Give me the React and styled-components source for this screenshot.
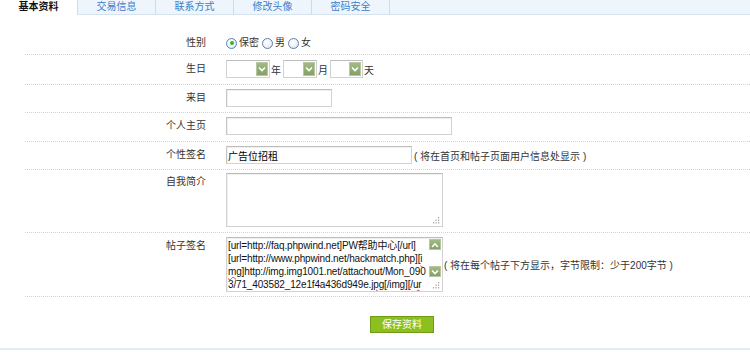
import React from 'react';
import styled, { createGlobalStyle } from 'styled-components';

const Global = createGlobalStyle`
  html, body { margin: 0; padding: 0; background: #fff; }
  body {
    font-family: "Liberation Sans", "Noto Sans CJK SC", sans-serif;
    font-size: 10px;
    color: #333;
  }
  * { box-sizing: border-box; }
`;

const Page = styled.div`
  width: 750px;
  height: 352px;
  overflow: hidden;
  display: flex;
  flex-direction: column;
`;

const TabBar = styled.div`
  display: flex;
  height: 15px;
  background: #eef5fd;
  border-bottom: 1px solid #d5e3ef;
`;

const Tab = styled.div`
  width: ${p => (p.$active ? 77 : 78)}px;
  height: ${p => (p.$active ? 15 : 14)}px;
  line-height: 14px;
  text-align: center;
  background: ${p => (p.$active ? '#fff' : 'transparent')};
  border-left: ${p => (p.$active ? 'none' : '1px solid #cadcee')};
  color: ${p => (p.$active ? '#111' : '#3d80c8')};
  font-weight: ${p => (p.$active ? 'bold' : 'normal')};
  flex-shrink: 0;
  cursor: pointer;
`;

const TabFill = styled.div`
  flex: 1;
  border-left: 1px solid #cadcee;
`;

const Form = styled.div`
  flex: 1;
  padding-top: 17px;
  display: flex;
  flex-direction: column;
`;

const Row = styled.div`
  display: flex;
  align-items: flex-start;
  margin-left: 25px;
  padding: ${p => p.$pt}px 0 ${p => p.$pb}px;
  border-bottom: 1px dotted #c3d8ea;
`;

const Label = styled.div`
  width: 201px;
  flex-shrink: 0;
  padding-right: 20px;
  text-align: right;
  line-height: ${p => p.$lh || 18}px;
  color: #333;
`;

const Field = styled.div`
  display: flex;
  align-items: center;
  gap: ${p => p.$gap || 0}px;
`;

const TextInput = styled.input`
  width: ${p => p.$w}px;
  height: 18px;
  border: 1px solid #d2d2d2;
  border-top-color: #bdbdbd;
  border-left-color: #c6c6c6;
  box-shadow: inset 1px 1px 0 #f0f0f0;
  padding: 0 1px;
  margin: 0;
  font-family: "Liberation Sans", "Noto Sans CJK SC", sans-serif;
  font-size: 10px;
  color: #000;
  outline: none;
`;

const Hint = styled.span`
  color: #333;
  white-space: nowrap;
  margin-left: ${p => p.$ml || 2}px;
`;

const RadioGroup = styled.div`
  display: flex;
  align-items: center;
  gap: 3px;
  height: 14px;
`;

const RadioOption = styled.label`
  display: inline-flex;
  align-items: center;
  gap: 2px;
  line-height: 14px;
  color: #333;
`;

const RadioCircle = styled.span`
  width: 11px;
  height: 11px;
  border-radius: 50%;
  border: 1px solid #5f82a9;
  background: radial-gradient(circle at 40% 35%, #ffffff 0%, #eef2f6 55%, #cfd9e4 100%);
  display: inline-flex;
  align-items: center;
  justify-content: center;
  &::after {
    content: '';
    width: 4px;
    height: 4px;
    border-radius: 50%;
    background: ${p => (p.$checked ? '#2fb72f' : 'transparent')};
  }
`;

const SelectWrap = styled.div`
  display: inline-flex;
  align-items: center;
  gap: 1px;
`;

const SelectBox = styled.div`
  width: ${p => p.$w}px;
  height: 18px;
  border: 1px solid #d2d2d2;
  border-top-color: #bdbdbd;
  background: #fff;
  display: flex;
  justify-content: flex-end;
  align-items: center;
  padding: 1px;
`;

const GreenBtn = styled.span`
  width: 12px;
  height: ${p => p.$h || 14}px;
  background: linear-gradient(#a2ba86, #85a064);
  border: 1px solid #b5c8a0;
  display: inline-flex;
  align-items: center;
  justify-content: center;
  flex-shrink: 0;
`;

const Chevron = ({ up }) => (
  <svg width="8" height="6" viewBox="0 0 8 6">
    <polyline
      points={up ? '1,5 4,2 7,5' : '1,1.5 4,4.5 7,1.5'}
      fill="none"
      stroke="#fff"
      strokeWidth="1.6"
    />
  </svg>
);

const Unit = styled.span`
  color: #333;
  margin-right: 2px;
`;

const AreaWrap = styled.div`
  position: relative;
  width: ${p => p.$w}px;
  height: ${p => p.$h}px;
`;

const TextArea = styled.textarea`
  width: 100%;
  height: 100%;
  display: block;
  margin: 0;
  border: 1px solid #d2d2d2;
  border-top-color: #bdbdbd;
  box-shadow: inset 1px 1px 0 #f0f0f0;
  resize: none;
  outline: none;
  font-family: "Liberation Sans", "Noto Sans CJK SC", sans-serif;
  font-size: 10px;
`;

const FakeArea = styled.div`
  width: 100%;
  height: 100%;
  display: flex;
  border: 1px solid #d2d2d2;
  border-top-color: #bdbdbd;
  box-shadow: inset 1px 1px 0 #f0f0f0;
  background: #fff;
`;

const AreaText = styled.div`
  flex: 1;
  min-width: 0;
  overflow: hidden;
  padding: 1px 0 0 1px;
  font-family: "Liberation Sans", "Noto Sans CJK SC", sans-serif;
  font-size: 10px;
  letter-spacing: -0.15px;
  line-height: 13px;
  color: #111;
`;

const Line = styled.div`
  white-space: nowrap;
`;

const Typo = styled.span`
  text-decoration: underline wavy #e23b3b;
  text-decoration-thickness: 1px;
  text-underline-offset: 1px;
`;

const ScrollCol = styled.div`
  width: 13px;
  flex-shrink: 0;
  display: flex;
  flex-direction: column;
  align-items: center;
  padding-top: 1px;
  margin-right: 1px;
`;

const Track = styled.div`
  height: 16px;
`;

const Grip = styled.svg`
  position: absolute;
  right: 3px;
  bottom: 3px;
`;

const GripIcon = () => (
  <Grip width="7" height="7" viewBox="0 0 7 7">
    <rect x="5" y="0" width="1.2" height="1.2" fill="#9a9a9a" />
    <rect x="2.5" y="2.6" width="1.2" height="1.2" fill="#9a9a9a" />
    <rect x="5" y="2.6" width="1.2" height="1.2" fill="#9a9a9a" />
    <rect x="0" y="5.2" width="1.2" height="1.2" fill="#9a9a9a" />
    <rect x="2.5" y="5.2" width="1.2" height="1.2" fill="#9a9a9a" />
    <rect x="5" y="5.2" width="1.2" height="1.2" fill="#9a9a9a" />
  </Grip>
);

const ButtonBar = styled.div`
  padding: 19px 0 0 370px;
  flex: 1;
`;

const SaveButton = styled.button`
  width: 64px;
  height: 17px;
  padding: 0;
  margin: 0;
  background: #8cc01f;
  border: 1px solid #6f9b16;
  color: #fff;
  font-family: "Liberation Sans", "Noto Sans CJK SC", sans-serif;
  font-size: 10px;
  line-height: 15px;
  cursor: pointer;
`;

const BottomLine = styled.div`
  height: 2px;
  background: #e1ecf5;
  margin-bottom: 2px;
`;

const tabs = ['基本资料', '交易信息', '联系方式', '修改头像', '密码安全'];

const Select = ({ w, unit }) => (
  <SelectWrap>
    <SelectBox $w={w}>
      <GreenBtn>
        <Chevron />
      </GreenBtn>
    </SelectBox>
    <Unit>{unit}</Unit>
  </SelectWrap>
);

export default function App() {
  return (
    <>
      <Global />
      <Page>
        <TabBar>
          {tabs.map((t, i) => (
            <Tab key={t} $active={i === 0}>{t}</Tab>
          ))}
          <TabFill />
        </TabBar>
        <Form>
          <Row $pt={4} $pb={4}>
            <Label $lh={14}>性别</Label>
            <RadioGroup>
              <RadioOption><RadioCircle $checked />保密</RadioOption>
              <RadioOption><RadioCircle />男</RadioOption>
              <RadioOption><RadioCircle />女</RadioOption>
            </RadioGroup>
          </Row>
          <Row $pt={5} $pb={6}>
            <Label>生日</Label>
            <Field>
              <Select w={44} unit="年" />
              <Select w={34} unit="月" />
              <Select w={33} unit="天" />
            </Field>
          </Row>
          <Row $pt={4} $pb={5}>
            <Label>来目</Label>
            <Field>
              <TextInput $w={106} />
            </Field>
          </Row>
          <Row $pt={4} $pb={6}>
            <Label>个人主页</Label>
            <Field>
              <TextInput $w={226} />
            </Field>
          </Row>
          <Row $pt={4} $pb={5}>
            <Label>个性签名</Label>
            <Field>
              <TextInput $w={186} defaultValue="广告位招租" />
              <Hint>( 将在首页和帖子页面用户信息处显示 )</Hint>
            </Field>
          </Row>
          <Row $pt={3} $pb={5}>
            <Label>自我简介</Label>
            <Field>
              <AreaWrap $w={217} $h={54}>
                <TextArea />
                <GripIcon />
              </AreaWrap>
            </Field>
          </Row>
          <Row $pt={4} $pb={4}>
            <Label>帖子签名</Label>
            <Field>
              <AreaWrap $w={217} $h={55}>
                <FakeArea>
                  <AreaText>
                    <Line>[url=http://faq.phpwind.net]PW帮助中心[/url]</Line>
                    <Line>[url=http://www.phpwind.net/hackmatch.php][<Typo>i</Typo></Line>
                    <Line><Typo>mg</Typo>]http://img.img1001.net/attachout/Mon_090</Line>
                    <Line>3/71_403582_12e1f4a436d949e.<Typo>jpg</Typo>[/img][/<Typo>ur</Typo></Line>
                  </AreaText>
                  <ScrollCol>
                    <GreenBtn $h={11}><Chevron up /></GreenBtn>
                    <Track />
                    <GreenBtn $h={11}><Chevron /></GreenBtn>
                  </ScrollCol>
                </FakeArea>
                <GripIcon />
              </AreaWrap>
              <Hint $ml={1}>( 将在每个帖子下方显示，字节限制：少于200字节 )</Hint>
            </Field>
          </Row>
          <ButtonBar>
            <SaveButton>保存资料</SaveButton>
          </ButtonBar>
          <BottomLine />
        </Form>
      </Page>
    </>
  );
}
